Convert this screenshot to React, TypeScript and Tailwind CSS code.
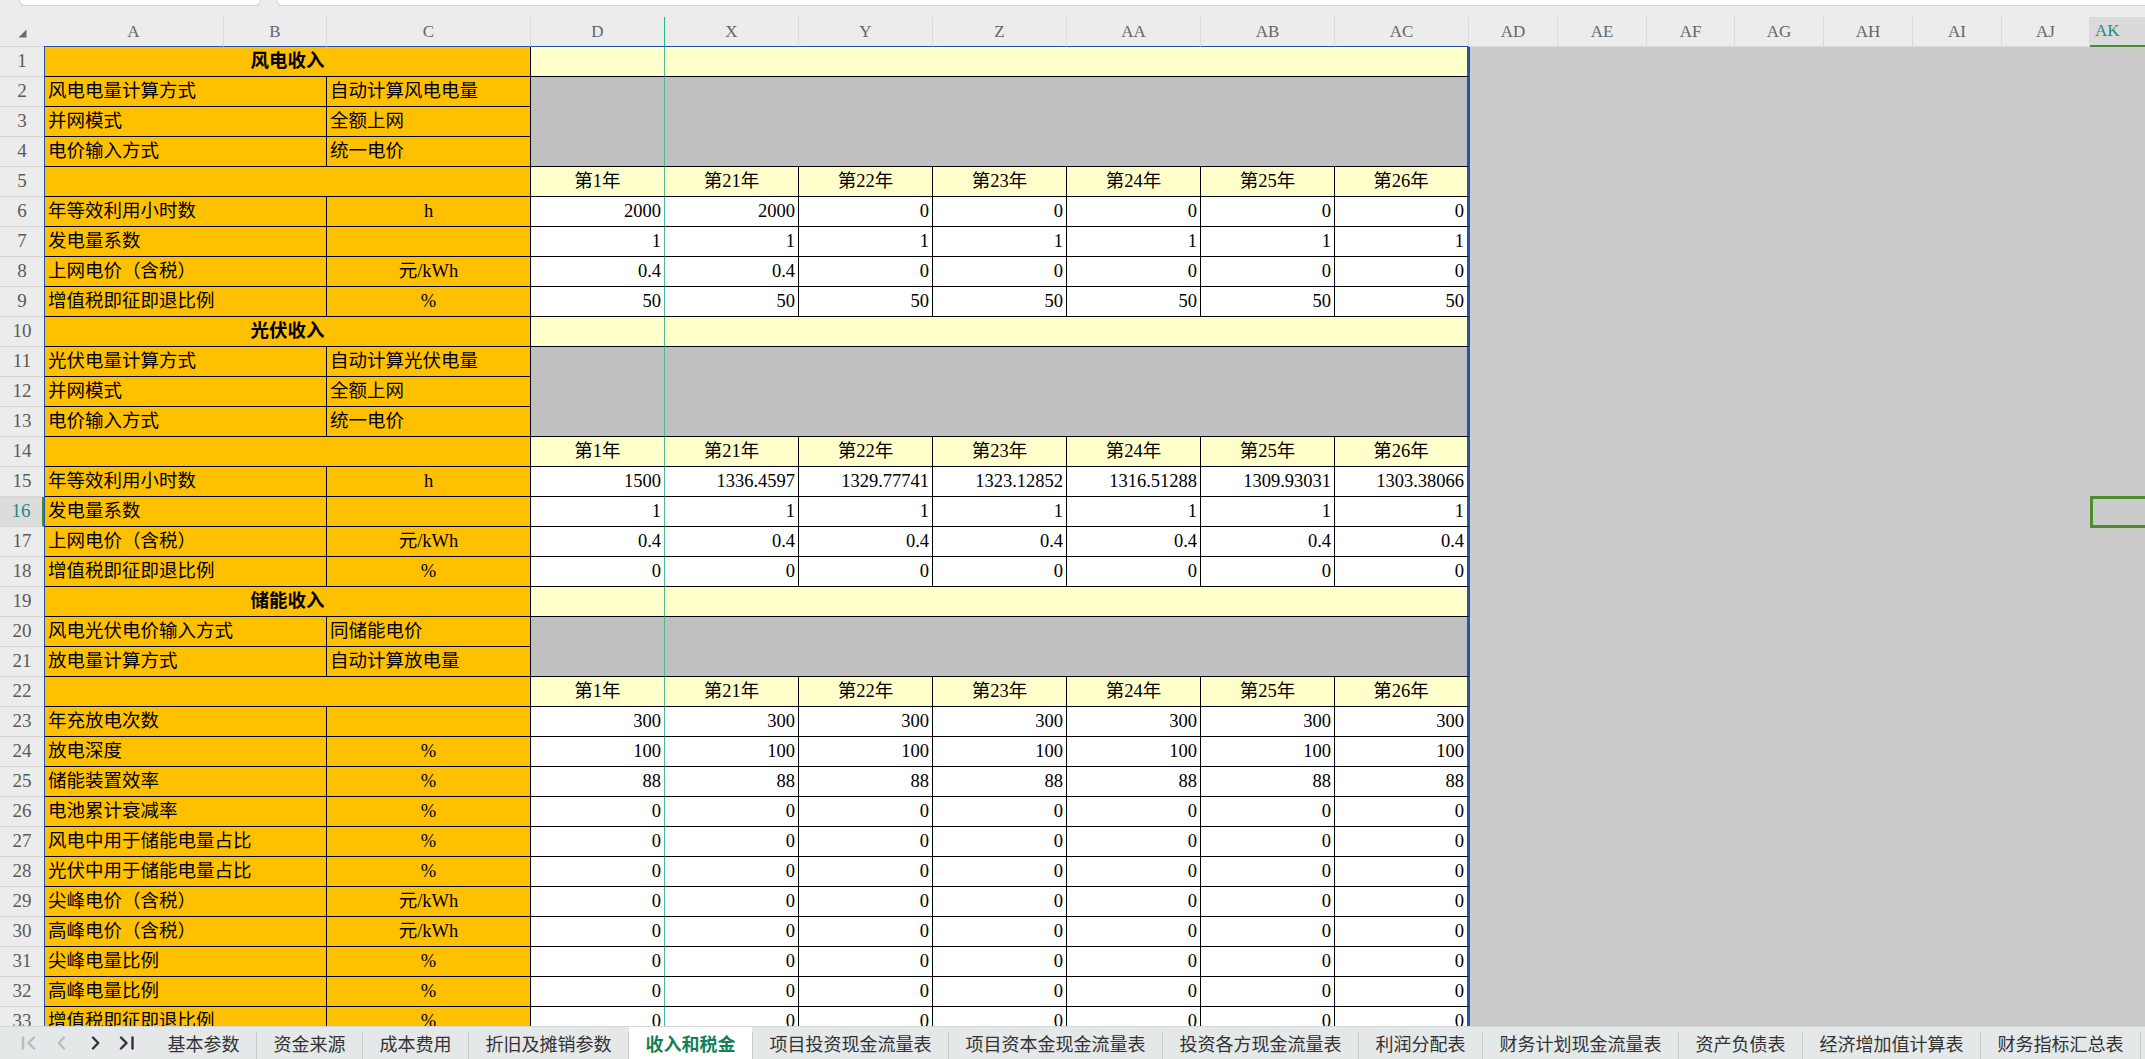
const YEARS = ['第1年', '第21年', '第22年', '第23年', '第24年', '第25年', '第26年'];

type Row =
  | { kind: 'title'; text: string }
  | { kind: 'info'; label: string; value: string; last?: boolean }
  | { kind: 'years' }
  | { kind: 'data'; label: string; unit: string; values: string[] };

const all = (v: string) => [v, v, v, v, v, v, v];

const ROWS: Row[] = [
  { kind: 'title', text: '风电收入' },
  { kind: 'info', label: '风电电量计算方式', value: '自动计算风电电量' },
  { kind: 'info', label: '并网模式', value: '全额上网' },
  { kind: 'info', label: '电价输入方式', value: '统一电价', last: true },
  { kind: 'years' },
  { kind: 'data', label: '年等效利用小时数', unit: 'h', values: ['2000', '2000', '0', '0', '0', '0', '0'] },
  { kind: 'data', label: '发电量系数', unit: '', values: all('1') },
  { kind: 'data', label: '上网电价（含税）', unit: '元/kWh', values: ['0.4', '0.4', '0', '0', '0', '0', '0'] },
  { kind: 'data', label: '增值税即征即退比例', unit: '%', values: all('50') },
  { kind: 'title', text: '光伏收入' },
  { kind: 'info', label: '光伏电量计算方式', value: '自动计算光伏电量' },
  { kind: 'info', label: '并网模式', value: '全额上网' },
  { kind: 'info', label: '电价输入方式', value: '统一电价', last: true },
  { kind: 'years' },
  {
    kind: 'data',
    label: '年等效利用小时数',
    unit: 'h',
    values: ['1500', '1336.4597', '1329.77741', '1323.12852', '1316.51288', '1309.93031', '1303.38066'],
  },
  { kind: 'data', label: '发电量系数', unit: '', values: all('1') },
  { kind: 'data', label: '上网电价（含税）', unit: '元/kWh', values: all('0.4') },
  { kind: 'data', label: '增值税即征即退比例', unit: '%', values: all('0') },
  { kind: 'title', text: '储能收入' },
  { kind: 'info', label: '风电光伏电价输入方式', value: '同储能电价' },
  { kind: 'info', label: '放电量计算方式', value: '自动计算放电量', last: true },
  { kind: 'years' },
  { kind: 'data', label: '年充放电次数', unit: '', values: all('300') },
  { kind: 'data', label: '放电深度', unit: '%', values: all('100') },
  { kind: 'data', label: '储能装置效率', unit: '%', values: all('88') },
  { kind: 'data', label: '电池累计衰减率', unit: '%', values: all('0') },
  { kind: 'data', label: '风电中用于储能电量占比', unit: '%', values: all('0') },
  { kind: 'data', label: '光伏中用于储能电量占比', unit: '%', values: all('0') },
  { kind: 'data', label: '尖峰电价（含税）', unit: '元/kWh', values: all('0') },
  { kind: 'data', label: '高峰电价（含税）', unit: '元/kWh', values: all('0') },
  { kind: 'data', label: '尖峰电量比例', unit: '%', values: all('0') },
  { kind: 'data', label: '高峰电量比例', unit: '%', values: all('0') },
  { kind: 'data', label: '增值税即征即退比例', unit: '%', values: all('0') },
];

const HEADERS: { name: string; w: string; table?: boolean; freeze?: boolean }[] = [
  { name: 'A', w: 'w-[180px]', table: true },
  { name: 'B', w: 'w-[103px]', table: true },
  { name: 'C', w: 'w-[204px]', table: true },
  { name: 'D', w: 'w-[134px]', table: true, freeze: true },
  { name: 'X', w: 'w-[134px]', table: true },
  { name: 'Y', w: 'w-[134px]', table: true },
  { name: 'Z', w: 'w-[134px]', table: true },
  { name: 'AA', w: 'w-[134px]', table: true },
  { name: 'AB', w: 'w-[134px]', table: true },
  { name: 'AC', w: 'w-[134px]', table: true },
  { name: 'AD', w: 'w-[89px]' },
  { name: 'AE', w: 'w-[89px]' },
  { name: 'AF', w: 'w-[88px]' },
  { name: 'AG', w: 'w-[89px]' },
  { name: 'AH', w: 'w-[89px]' },
  { name: 'AI', w: 'w-[89px]' },
  { name: 'AJ', w: 'w-[88px]' },
];

const TABS = [
  '基本参数',
  '资金来源',
  '成本费用',
  '折旧及摊销参数',
  '收入和税金',
  '项目投资现金流量表',
  '项目资本金现金流量表',
  '投资各方现金流量表',
  '利润分配表',
  '财务计划现金流量表',
  '资产负债表',
  '经济增加值计算表',
  '财务指标汇总表',
];

const ORANGE = 'bg-[#ffc000] border-r border-b border-black';

function Cells({ row }: { row: Row }) {
  if (row.kind === 'title') {
    return (
      <>
        <div className={`w-[486px] ${ORANGE} flex items-center justify-center font-bold`}>{row.text}</div>
        <div className="w-[134px] bg-[#ffffcc] border-b border-black border-r border-r-[#4cb893]" />
        <div className="w-[805px] bg-[#ffffcc] border-b border-black border-r-[3px] border-r-[#2553a6]" />
      </>
    );
  }
  if (row.kind === 'info') {
    return (
      <>
        <div className={`w-[282px] ${ORANGE} flex items-center pl-[3px]`}>{row.label}</div>
        <div className={`w-[204px] ${ORANGE} flex items-center pl-[3px]`}>{row.value}</div>
        <div className={`w-[134px] bg-[#c0c0c0] border-r border-r-[#4cb893] ${row.last ? 'border-b border-b-black' : ''}`} />
        <div className={`w-[805px] bg-[#c0c0c0] border-r-[3px] border-r-[#2553a6] ${row.last ? 'border-b border-b-black' : ''}`} />
      </>
    );
  }
  if (row.kind === 'years') {
    return (
      <>
        <div className={`w-[486px] ${ORANGE}`} />
        {YEARS.map((y, i) => (
          <div
            key={y}
            className={`bg-[#ffffcc] border-b border-black flex items-center justify-center ${
              i === 0
                ? 'w-[134px] border-r border-r-[#4cb893]'
                : i === 6
                  ? 'w-[135px] border-r-[3px] border-r-[#2553a6]'
                  : 'w-[134px] border-r'
            }`}
          >
            {y}
          </div>
        ))}
      </>
    );
  }
  return (
    <>
      <div className={`w-[282px] ${ORANGE} flex items-center pl-[3px]`}>{row.label}</div>
      <div className={`w-[204px] ${ORANGE} flex items-center justify-center`}>{row.unit}</div>
      {row.values.map((v, i) => (
        <div
          key={i}
          className={`bg-white border-b border-black flex items-center justify-end pr-[3px] ${
            i === 0
              ? 'w-[134px] border-r border-r-[#4cb893]'
              : i === 6
                ? 'w-[135px] border-r-[3px] border-r-[#2553a6]'
                : 'w-[134px] border-r'
          }`}
        >
          {v}
        </div>
      ))}
    </>
  );
}

function SheetRow({ row, n }: { row: Row; n: number }) {
  const active = n === 16;
  return (
    <div className="flex h-[30px] shrink-0">
      <div
        className={`w-[44px] shrink-0 flex items-center justify-center border-b border-b-[#d6d6d6] text-[19px] ${
          active ? 'bg-[#dcdcdc] text-[#1b8b90] border-r-2 border-r-[#3f8f2f]' : 'bg-[#ececec] text-[#5a5a5a]'
        }`}
      >
        {n}
      </div>
      <div className="flex shrink-0 border-l border-[#2553a6] text-[18.5px] text-black">
        <Cells row={row} />
      </div>
      <div className="flex-1 bg-[#cbcbcb] flex justify-end">
        {active && (
          <div className="relative z-10 -mt-px w-[55px] h-[32px] shrink-0 border-[3px] border-r-0 border-[#4b8f2c]" />
        )}
      </div>
    </div>
  );
}

function Chevron({ dir, color, bar }: { dir: 'l' | 'r'; color: string; bar?: boolean }) {
  return (
    <svg width={bar ? 16 : 9} height="14" viewBox={bar ? '0 0 16 14' : '0 0 9 14'} fill="none" stroke={color} strokeWidth="2.4" strokeLinecap="round" strokeLinejoin="round">
      {dir === 'l' && bar && (
        <>
          <path d="M2 1.5v11" />
          <path d="M13 1.5L7.5 7l5.5 5.5" />
        </>
      )}
      {dir === 'l' && !bar && <path d="M7 1.5L1.8 7L7 12.5" />}
      {dir === 'r' && !bar && <path d="M2 1.5L7.2 7L2 12.5" />}
      {dir === 'r' && bar && (
        <>
          <path d="M2 1.5L7.5 7L2 12.5" />
          <path d="M13.5 1.5v11" />
        </>
      )}
    </svg>
  );
}

export default function App() {
  return (
    <div className="w-[2145px] h-[1059px] overflow-hidden bg-[#ececec] flex flex-col font-['Liberation_Serif','Noto_Sans_CJK_SC',serif]">
      {/* name box + formula bar, mostly scrolled off */}
      <div className="h-[17px] shrink-0 flex gap-[15px] pl-[19px]">
        <div className="w-[242px] h-[6px] bg-white border border-t-0 border-[#d2d2d2] rounded-b-[6px]" />
        <div className="flex-1 h-[6px] bg-white border border-t-0 border-r-0 border-[#d2d2d2] rounded-bl-[6px]" />
      </div>

      <div className="flex-1 overflow-hidden flex flex-col">
        {/* column headers */}
        <div className="flex h-[30px] shrink-0 text-[17px] text-[#666]">
          <div className="w-[44px] shrink-0 border-b border-[#d6d6d6] flex items-end justify-center pb-[8px]">
            <svg width="10" height="9" viewBox="0 0 10 9">
              <path d="M9.5 0.5V8.5H1.5Z" fill="#6b6b6b" />
            </svg>
          </div>
          {HEADERS.map((h) => (
            <div
              key={h.name}
              className={`${h.w} shrink-0 flex items-center justify-center border-b ${
                h.table ? 'border-b-[#2553a6]' : 'border-b-[#d6d6d6]'
              } border-r ${h.freeze ? 'border-r-[#21bf80]' : 'border-r-[#dadada]'}`}
            >
              {h.name}
            </div>
          ))}
          <div className="flex-1 bg-[#dadada] border-b-2 border-[#3f8f2f] flex items-center pl-[5px] text-[#1a8f86]">AK</div>
        </div>

        {ROWS.map((row, i) => (
          <SheetRow key={i} row={row} n={i + 1} />
        ))}
      </div>

      {/* sheet tabs */}
      <div className="h-[33px] shrink-0 bg-[#e4e8e8] border-t border-[#d3d7d7] flex items-stretch font-['Noto_Sans_CJK_SC',sans-serif] text-[18px] text-[#333]">
        <div className="w-[151px] shrink-0 flex items-center">
          <div className="ml-[21px]">
            <Chevron dir="l" color="#b8bcbc" bar />
          </div>
          <div className="ml-[20px]">
            <Chevron dir="l" color="#b8bcbc" />
          </div>
          <div className="ml-[25px]">
            <Chevron dir="r" color="#333" />
          </div>
          <div className="ml-[19px]">
            <Chevron dir="r" color="#333" bar />
          </div>
        </div>
        {TABS.map((t) => {
          const active = t === '收入和税金';
          return (
            <div key={t} className="flex items-stretch shrink-0">
              <div
                className={`px-[16.5px] flex items-center whitespace-nowrap ${
                  active ? 'bg-white text-[#167f58] font-bold' : ''
                }`}
              >
                {t}
              </div>
              <div className="w-px self-end h-[27px] bg-[#c6cbcb]" />
            </div>
          );
        })}
      </div>
    </div>
  );
}
